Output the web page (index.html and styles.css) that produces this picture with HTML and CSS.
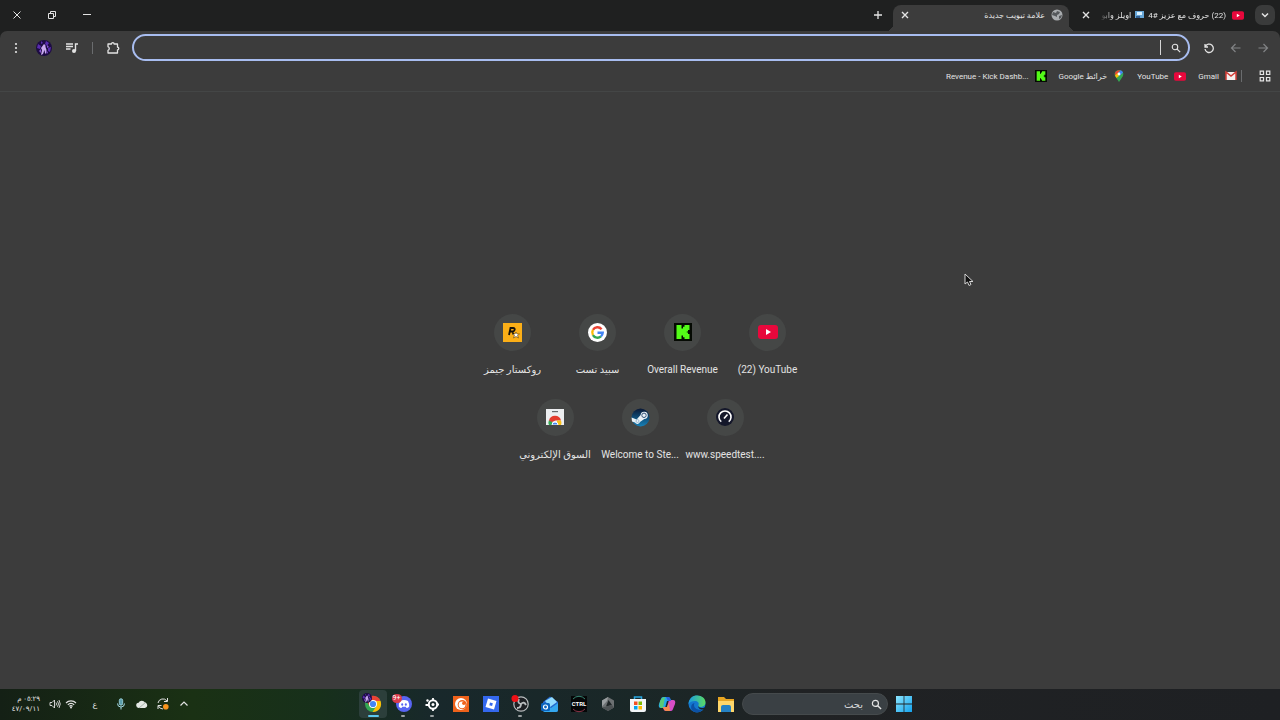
FILE: index.html
```html
<!DOCTYPE html>
<html lang="ar" dir="rtl">
<head>
    <meta charset="UTF-8">
    <meta name="viewport" content="width=device-width, initial-scale=1.0">
    <title>علامة تبويب جديدة</title>
    <link rel="stylesheet" href="styles.css">
</head>
<body>
    <!-- shared icons -->
    <svg class="defs" aria-hidden="true">
        <symbol id="i-youtube" viewBox="0 0 20 14"><rect width="20" height="14" rx="3" fill="#e8083c"/><path d="M8 4l5 3-5 3z" fill="#fff"/></symbol>
        <symbol id="i-kick" viewBox="0 0 18 18"><path d="M0 0h18v18H0z" fill="#050a03"/><path d="M2.500 2h5v3.500H9V3.800h1.500V2h5v5H14v1.500h-1.200v1H14V11h1.500v5h-5v-1.800H9v-1.700H7.500V16h-5z" fill="#53fc18"/></symbol>
        <symbol id="i-close" viewBox="0 0 10 10"><path d="M2 2l6 6M8 2L2 8" stroke="currentColor" stroke-width="1.400"/></symbol>
        <symbol id="i-search" viewBox="0 0 12 12"><circle cx="4.800" cy="4.800" r="3.300" fill="none" stroke="currentColor" stroke-width="1.300"/><path d="M7.300 7.300l3.700 3.700" stroke="currentColor" stroke-width="1.500"/></symbol>
        <symbol id="i-arrow" viewBox="0 0 12 12"><path d="M1.500 6h9M6.500 2l4 4-4 4" fill="none" stroke="currentColor" stroke-width="1.200"/></symbol>
        <symbol id="i-avatar" viewBox="0 0 16 16"><circle cx="8" cy="8" r="8" fill="#1d0c43"/><path d="M2 4l3 2-1 3-3-1zM10 1l3 2-2 3-2-2zM12 8l3-1-1 5-2-1zM5 1l2 2-2 1z" fill="#5a2cb0"/><path d="M8 4q2 1 1.500 3l1 3-.5 4-1-1-.5-3L7 14l-2 1 1-5-1-2z" fill="#c8a8ee"/><path d="M3 11l2-2v4zM11 5l2 2-2 1zM10 11l2 1-1 2z" fill="#8853d6"/></symbol>
    </svg>

    <header class="tab-strip">
        <button class="tab-search" aria-label="البحث في علامات التبويب">
            <svg width="10" height="10" viewBox="0 0 10 10"><path d="M2 3.500l3 3 3-3" fill="none" stroke="currentColor" stroke-width="1.500"/></svg>
        </button>
        <div class="tab">
            <svg width="12" height="9"><use href="#i-youtube"/></svg>
            <span class="tab-title faded">(22) حروف مع عزيز #4 <svg class="tv" width="9" height="8" viewBox="0 0 9 8"><path d="M0 0h9v7H0z" fill="#67a7d8"/><path d="M2 1h5v3H2z" fill="#d9f0ff"/><path d="M1 5h4v2H1z" fill="#315f92"/></svg> اويلز وابو</span>
            <button class="icon-btn" aria-label="إغلاق"><svg width="10" height="10"><use href="#i-close"/></svg></button>
        </div>
        <div class="tab active">
            <svg width="12" height="12" viewBox="0 0 12 12"><circle cx="6" cy="6" r="5.500" fill="#a9acaf"/><path d="M2 3l3 1 1-2 3 1-1 2-2 1v2L4 7 1 6zM8 7l3-1-1 3-2 1z" fill="#55585b"/></svg>
            <span class="tab-title">علامة تبويب جديدة</span>
            <button class="icon-btn" aria-label="إغلاق"><svg width="10" height="10"><use href="#i-close"/></svg></button>
        </div>
        <button class="icon-btn new-tab" aria-label="علامة تبويب جديدة"><svg width="10" height="10" viewBox="0 0 10 10"><path d="M5 1v8M1 5h8" stroke="currentColor" stroke-width="1.300"/></svg></button>
        <div class="window-controls">
            <button class="icon-btn" aria-label="تصغير"><svg width="10" height="10" viewBox="0 0 10 10"><path d="M1 4.500h8" stroke="currentColor"/></svg></button>
            <button class="icon-btn" aria-label="استعادة"><svg width="10" height="10" viewBox="0 0 10 10"><path d="M1.500 3.500h5v5h-5zM3.500 3V1.500h5v5H7" fill="none" stroke="currentColor"/></svg></button>
            <button class="icon-btn" aria-label="إغلاق النافذة"><svg width="10" height="10" viewBox="0 0 10 10"><path d="M1.500 1.500l7 7M8.500 1.500l-7 7" stroke="currentColor"/></svg></button>
        </div>
    </header>

    <nav class="toolbar">
        <button class="icon-btn dim" aria-label="رجوع"><svg width="12" height="12"><use href="#i-arrow"/></svg></button>
        <button class="icon-btn dim flip" aria-label="للأمام"><svg width="12" height="12"><use href="#i-arrow"/></svg></button>
        <button class="icon-btn" aria-label="إعادة التحميل"><svg width="12" height="12" viewBox="0 0 12 12"><path d="M2 2v3h3M2.300 4.600A4.200 4.200 0 1 1 2 7" fill="none" stroke="currentColor" stroke-width="1.300"/></svg></button>
        <label class="omnibox">
            <svg width="10" height="10"><use href="#i-search"/></svg>
            <span class="caret"></span>
            <input type="text" aria-label="شريط العناوين">
        </label>
        <div class="extensions">
            <button class="icon-btn" aria-label="الإضافات"><svg width="14" height="14" viewBox="0 0 14 14"><path d="M2 3h3.500a1.300 1.300 0 0 1 2.600 0h3.400v3.200a1.300 1.300 0 0 1 0 2.600V12H2V9.300a1.900 1.900 0 0 0 0-3.600z" fill="none" stroke="currentColor" stroke-width="1.300" stroke-linejoin="round"/></svg></button>
            <span class="divider"></span>
            <button class="icon-btn" aria-label="التحكم في الوسائط"><svg width="14" height="12" viewBox="0 0 14 12"><path d="M1 2h7M1 4.500h7M1 7h4.500M10.500 9V2H13" fill="none" stroke="currentColor" stroke-width="1.400"/><circle cx="9" cy="9" r="2" fill="currentColor"/></svg></button>
            <button class="icon-btn" aria-label="الملف الشخصي"><svg width="16" height="16"><use href="#i-avatar"/></svg></button>
            <button class="icon-btn" aria-label="القائمة"><svg width="4" height="12" viewBox="0 0 4 12"><g fill="currentColor"><circle cx="2" cy="2" r="1.100"/><circle cx="2" cy="6" r="1.100"/><circle cx="2" cy="10" r="1.100"/></g></svg></button>
        </div>
    </nav>

    <nav class="bookmarks">
        <button class="icon-btn apps" aria-label="التطبيقات"><svg width="12" height="12" viewBox="0 0 12 12"><path d="M1.200 1.200h3.300v3.300H1.200zM7.500 1.200h3.300v3.300H7.500zM1.200 7.500h3.300v3.300H1.200zM7.500 7.500h3.300v3.300H7.500z" fill="none" stroke="currentColor" stroke-width="1.200"/></svg></button>
        <span class="divider"></span>
        <a class="bookmark" href="#"><svg width="12" height="12" viewBox="0 0 12 12"><path d="M1 2h10v8H1z" fill="#f4f0ef"/><path d="M1 10V2l5 4 5-4v8" fill="none" stroke="#d23c36" stroke-width="1.500"/></svg><span>Gmail</span></a>
        <a class="bookmark" href="#"><svg width="12" height="9"><use href="#i-youtube"/></svg><span>YouTube</span></a>
        <a class="bookmark" href="#"><svg width="12" height="12" viewBox="0 0 12 12"><path d="M6 12L3 7.500C0 4 2.500 0 6 0s6 4 3 7.500z" fill="#34a853"/><path d="M3 1.500A5 5 0 0 1 7.500.3L3 5.500 1.800 4A4 4 0 0 1 3 1.500z" fill="#ea4335"/><path d="M7.500.3A4 4 0 0 1 10 2.500L6.500 6 5 3.500z" fill="#4285f4"/><path d="M2 5.500L4.500 3 6 6 3.500 8z" fill="#fbbc04"/><circle cx="6" cy="4" r="1.400" fill="#fff"/></svg><span>خرائط Google</span></a>
        <a class="bookmark" href="#"><svg width="12" height="12"><use href="#i-kick"/></svg><span dir="ltr">Revenue - Kick Dashb...</span></a>
    </nav>

    <main class="new-tab-page">
        <div class="shortcuts">
            <a class="shortcut" href="#"><span class="circle"><svg width="20" height="14"><use href="#i-youtube"/></svg></span><span dir="ltr">(22) YouTube</span></a>
            <a class="shortcut" href="#"><span class="circle"><svg width="18" height="18"><use href="#i-kick"/></svg></span><span dir="ltr">Overall Revenue</span></a>
            <a class="shortcut" href="#"><span class="circle"><svg width="19" height="19" viewBox="0 0 20 20"><circle cx="10" cy="10" r="10" fill="#fff"/><g fill="none" stroke-width="2.500"><path d="M14.300 6.500A5.500 5.500 0 0 0 5.200 7.300" stroke="#ea4335"/><path d="M5.200 7.300a5.500 5.500 0 0 0 0 5.400" stroke="#fbbc05"/><path d="M5.200 12.700a5.500 5.500 0 0 0 8.400 1.400" stroke="#34a853"/><path d="M13.600 14.100a5.500 5.500 0 0 0 1.900-3.800H10" stroke="#4285f4"/></g></svg></span><span>سبيد تست</span></a>
            <a class="shortcut" href="#"><span class="circle"><svg width="19" height="19" viewBox="0 0 19 19"><path d="M0 0h19v19H0z" fill="#fbaf17"/><path d="M6 12L7.500 5H10q2.500.3 1.500 2.200Q11 8.500 9 8.500H7M9.500 8.500l1 3" fill="none" stroke="#17120a" stroke-width="1.800"/><path d="M13 9l1 2h2.500l-2 1.500 1 2.500-2.500-1.500L10.500 15l1-2.500-2-1.500H12z" fill="#fff" stroke="#5b3c08" stroke-width=".6"/></svg></span><span>روكستار جيمز</span></a>
            <a class="shortcut" href="#"><span class="circle"><svg width="18" height="18" viewBox="0 0 18 18"><circle cx="9" cy="9" r="9" fill="#14172a"/><path d="M5.300 13.700a6 6 0 1 1 7.400 0" fill="none" stroke="#fff" stroke-width="1.600"/><path d="M8 10.500l3.500-4" stroke="#fff" stroke-width="1.600"/></svg></span><span dir="ltr">www.speedtest....</span></a>
            <a class="shortcut" href="#"><span class="circle"><svg width="19" height="19" viewBox="0 0 19 19"><defs><linearGradient id="steam" x2="0" y2="1"><stop stop-color="#0a1835"/><stop offset="1" stop-color="#1681b8"/></linearGradient></defs><circle cx="9.500" cy="9.500" r="9" fill="url(#steam)"/><path d="M.6 9.500l5 2 4-4.500a3.600 3.600 0 1 1 3.700 4L9 14a2.700 2.700 0 0 1-5 .5l-3-1z" fill="#eaf1f6"/><circle cx="13" cy="7.300" r="2.200" fill="none" stroke="#34557a"/><circle cx="6.500" cy="13" r="1.500" fill="none" stroke="#7aa6c4" stroke-width=".7"/></svg></span><span dir="ltr">Welcome to Ste...</span></a>
            <a class="shortcut" href="#"><span class="circle"><svg width="18" height="16" viewBox="0 0 18 16"><path d="M0 0h18v16H0z" fill="#eceef0"/><path d="M6 2h6v1.200H6z" fill="#66696d"/><path d="M3 16a6 6 0 0 1 0-5l3.500 1.500L6 16z" fill="#34a853"/><path d="M3 11.500a6.200 6.200 0 0 1 12 0H9.500L6 13z" fill="#e33b2e"/><path d="M11 11.500h4q1 2.500 0 4.500h-4z" fill="#fbc116"/><path d="M6 16a3 3 0 1 1 6 0z" fill="#4285f4" stroke="#fff"/></svg></span><span>السوق الإلكتروني</span></a>
        </div>
    </main>

    <footer class="taskbar">
        <div></div>
        <div class="dock">
            <button class="icon-btn" aria-label="ابدأ"><svg width="16" height="16" viewBox="0 0 16 16"><defs><linearGradient id="win" x2="1" y2="1"><stop stop-color="#8ce6ff"/><stop offset="1" stop-color="#14a2ed"/></linearGradient></defs><path d="M0 0h7.600v7.600H0zM8.400 0H16v7.600H8.400zM0 8.400h7.600V16H0zM8.400 8.400H16V16H8.400z" fill="url(#win)"/></svg></button>
            <label class="task-search">
                <svg width="11" height="11"><use href="#i-search"/></svg>
                <input type="text" placeholder="بحث" aria-label="بحث">
            </label>
            <div class="apps-row">
                <button class="app" aria-label="مستكشف الملفات"><svg width="18" height="18" viewBox="0 0 18 18"><path d="M1 2h6l2 2h8v13H1z" fill="#e8a622"/><path d="M1 6h16v11H1z" fill="#ffd76a"/><path d="M4 12q0-2 2-2h6q2 0 2 2v5H4z" fill="#2582c4"/></svg></button>
                <button class="app" aria-label="Edge"><svg width="18" height="18" viewBox="0 0 18 18"><defs><linearGradient id="edge" x2="1" y2="0"><stop stop-color="#199be2"/><stop offset="1" stop-color="#5bdc62"/></linearGradient></defs><circle cx="9" cy="9" r="8.500" fill="#1377cf"/><path d="M.5 9C1 3 5 .5 9 .5c5 0 8.500 3 8.500 7 0 3-2.500 4.500-5 4.500-2 0-3-1-2-2 1-2-1-4-3.500-4C4 6 1.500 7 .5 9z" fill="url(#edge)"/><path d="M6.500 8c-2 4 2 8 8 6.500-3 4-9 3.500-11 0-1-3 0-6 3-6.500z" fill="#0c51a5"/><path d="M10 10c0 2 1.500 3 4 3 1.500 0 2.500-.3 3.300-1 .2 1-.5 2-1.500 2.500-3 .5-6-1-5.800-4.500z" fill="#17242a"/></svg></button>
                <button class="app" aria-label="Copilot"><svg width="18" height="18" viewBox="0 0 18 18"><path d="M5 2h5q2 0 2.500 2L13 6H9L7 13H3Q0 13 1 9l2-5q.5-2 2-2z" fill="#24a8e8"/><path d="M2 6l2-3 3-1-2 11H3q-2-1-1-7z" fill="#58c976"/><path d="M13 16H8q-2 0-2.500-2L5 12h4l2-7h4q3 0 2 4l-2 5q-.5 2-2 2z" fill="#d74dc7"/><path d="M5 12h4l2-4 1 8H8q-2 0-3-4z" fill="#f4884f"/><path d="M8 2h2q2 0 3 4h-3z" fill="#295fdf"/></svg></button>
                <button class="app" aria-label="Microsoft Store"><svg width="18" height="18" viewBox="0 0 18 18"><path d="M5.500 5V2h7v3" fill="none" stroke="#28a6df" stroke-width="1.500"/><path d="M1 4h16v11q0 2-2 2H3q-2 0-2-2z" fill="#f2f5f7"/><path d="M5 6.500h3.500V10H5z" fill="#f25022"/><path d="M9.500 6.500H13V10H9.500z" fill="#7fba00"/><path d="M5 11h3.500v3.500H5z" fill="#00a4ef"/><path d="M9.500 11H13v3.500H9.500z" fill="#ffb900"/></svg></button>
                <button class="app" aria-label="Hexagon"><svg width="18" height="18" viewBox="0 0 18 18"><path d="M9 2l6 3.500v7L9 16l-6-3.500v-7z" fill="#6c7072"/><path d="M9 2L3 5.500v6L8 6z" fill="#9a9ea0"/><path d="M9.500 5l3.500 5-6 1.500z" fill="#202628"/><path d="M3 12.500l4-1 6-1.500 2 2.500L9 16z" fill="#4d5254"/></svg></button>
                <button class="app" aria-label="CTRL"><svg width="18" height="18" viewBox="0 0 18 18"><path d="M1 1h16v16H1z" fill="#050607"/><path d="M3 4a8 8 0 0 1 12 0" fill="none" stroke="#43a58e" stroke-width=".8"/><path d="M3 14a8 8 0 0 0 12 0" fill="none" stroke="#ad4058" stroke-width=".8"/><text x="9" y="11" direction="ltr" text-anchor="middle" class="ctrl-text">CTRL</text></svg></button>
                <button class="app" aria-label="Outlook"><svg width="18" height="18" viewBox="0 0 18 18"><path d="M2 7l7-5.500L17 7v8q0 2-2 2H4q-2 0-2-2z" fill="#2467cc"/><path d="M4 6l7-4 5 5-7 5z" fill="#91dcff"/><path d="M2 8l8 5 7-5v7q0 2-2 2H4q-2 0-2-2z" fill="#35a8ef"/><rect y="8" width="9" height="8" rx="1.500" fill="#0b64bd"/><circle cx="4.500" cy="12" r="2" fill="none" stroke="#fff" stroke-width="1.200"/></svg></button>
                <button class="app running" aria-label="OBS Studio"><svg width="18" height="18" viewBox="0 0 18 18"><circle cx="10" cy="9" r="7.200" fill="#1d2024" stroke="#b9bdbf" stroke-width="1.200"/><path d="M10 9q-4-1-2-5M10 9q3-3 5 1M10 9q0 4-4 4" fill="none" stroke="#b9bdbf" stroke-width="1.800"/><circle cx="4" cy="3.500" r="3.500" fill="#ee1016"/></svg></button>
                <button class="app" aria-label="Roblox"><svg width="16" height="16" viewBox="0 0 16 16"><path d="M0 0h16v16H0z" fill="#3468ee"/><path d="M5 2.500l8.500 2.400L11 13.500 2.500 11z" fill="#fff"/><path d="M7 6.500l2.800.7-.7 2.800-2.800-.8z" fill="#3468ee"/></svg></button>
                <button class="app" aria-label="Crunchyroll"><svg width="16" height="16" viewBox="0 0 16 16"><path d="M0 0h16v16H0z" fill="#ef621b"/><circle cx="8" cy="8" r="6" fill="#fff"/><circle cx="9.300" cy="8.700" r="4.600" fill="#ef621b"/><circle cx="9" cy="8.800" r="3.400" fill="#fff"/><circle cx="10.800" cy="7.300" r="1.700" fill="#ef621b"/></svg></button>
                <button class="app running" aria-label="SteelSeries GG"><svg width="16" height="16" viewBox="0 0 16 16"><circle cx="9" cy="8.500" r="4.200" fill="none" stroke="#fff" stroke-width="2"/><circle cx="9" cy="8.500" r="1.500" fill="#fff"/><path d="M9 2v2M9 13v2M1.500 9H5M13 8.500h2" stroke="#fff" stroke-width="1.800"/><circle cx="3.500" cy="4.500" r="1.200" fill="#fff"/></svg></button>
                <button class="app running" aria-label="Discord"><svg width="18" height="18" viewBox="0 0 18 18"><circle cx="10" cy="9" r="8" fill="#5865f2"/><path d="M6 6q4-2 8 0 1.500 3 1.200 5.500Q14 13 12.500 13l-.7-1.200H8.200L7.500 13Q6 13 4.800 11.500 4.500 9 6 6z" fill="#fff"/><ellipse cx="8.200" cy="9.500" rx="1" ry="1.200" fill="#5865f2"/><ellipse cx="11.800" cy="9.500" rx="1" ry="1.200" fill="#5865f2"/></svg><span class="badge" dir="ltr">9+</span></button>
                <button class="app running current" aria-label="Chrome"><svg width="18" height="18" viewBox="0 0 18 18"><circle cx="9" cy="9" r="8" fill="#34a853"/><path d="M2 5a8 8 0 0 1 14.500 1H9l-3.500 5z" fill="#ea4335"/><path d="M9 6h7.500A8 8 0 0 1 8.500 17l4-6z" fill="#fbbc05"/><circle cx="9" cy="9" r="4" fill="#fff"/><circle cx="9" cy="9" r="3.100" fill="#4285f4"/></svg><svg class="profile" width="10" height="10"><use href="#i-avatar"/></svg></button>
            </div>
        </div>
        <div class="tray">
            <button class="icon-btn" aria-label="إظهار الرموز المخفية"><svg width="10" height="10" viewBox="0 0 10 10"><path d="M1.500 6.500L5 3l3.500 3.500" fill="none" stroke="currentColor" stroke-width="1.200"/></svg></button>
            <button class="icon-btn" aria-label="التحديثات"><svg width="12" height="12" viewBox="0 0 12 12"><path d="M1 5a5 5 0 0 1 9-2M10.500 0v3.500H7M6 11a5 5 0 0 1-4.500-3M1 11V7.500h3.500" fill="none" stroke="currentColor" stroke-width="1"/><circle cx="8.800" cy="8.800" r="2.800" fill="#f7941d"/></svg></button>
            <button class="icon-btn" aria-label="OneDrive"><svg width="12" height="10" viewBox="0 0 12 10"><path d="M3 9a2.600 2.600 0 0 1-.4-5.200A3.600 3.600 0 0 1 9 3.500 2.800 2.800 0 0 1 9 9z" fill="#e4e9e5"/><path d="M3 9l6.500-5.500" stroke="#aab6ad"/></svg></button>
            <button class="icon-btn" aria-label="الميكروفون"><svg width="10" height="12" viewBox="0 0 10 12"><rect x="3.300" y=".7" width="3.400" height="6.500" rx="1.700" fill="#5d9fae" stroke="#a6dce7" stroke-width=".8"/><path d="M1.500 5.500a3.500 3.500 0 0 0 7 0M5 9v2.500" fill="none" stroke="#a6dce7"/></svg></button>
            <button class="icon-btn lang">ع</button>
            <button class="icon-btn network" aria-label="الشبكة والصوت">
                <svg width="12" height="10" viewBox="0 0 12 10"><path d="M1 4a7 7 0 0 1 10 0M2.800 5.800a4.500 4.500 0 0 1 6.400 0M4.400 7.400a2.300 2.300 0 0 1 3.200 0" fill="none" stroke="currentColor" stroke-width="1.200"/><circle cx="6" cy="8.600" r="1" fill="currentColor"/></svg>
                <svg width="12" height="10" viewBox="0 0 12 10"><path d="M1 3.500h2L5.500 1v8L3 6.500H1zM7 3.500q1 1.500 0 3M8.500 2.200q2 2.800 0 5.600M10 1q2.500 4 0 8" fill="none" stroke="currentColor" stroke-width=".9"/></svg>
            </button>
            <div class="clock"><time>٠٥:٢٩ م</time><time>٤٧/٠٩/١١</time></div>
        </div>
    </footer>

    <svg class="cursor" width="10" height="14" viewBox="0 0 10 14"><path d="M1 1v10l2.500-2 1.500 3.500 2-1L5.500 8.500H9z" fill="#111" stroke="#d5d5d5"/></svg>
</body>
</html>
```
FILE: styles.css
```css
* {
    box-sizing: border-box;
}
body {
    margin: 0;
    min-height: 100vh;
    display: flex;
    flex-direction: column;
    background-color: #1f2020;
    color: #e3e3e3;
    font-family: Roboto, "Open Sans", "DejaVu Sans", sans-serif;
    font-size: 8px;
}
a {
    color: inherit;
    text-decoration: none;
}
svg {
    flex-shrink: 0;
}
button, input {
    border: none;
    padding: 0;
    background: none;
    color: inherit;
    font: inherit;
    outline: none;
}
.defs {
    position: absolute;
    width: 0;
    height: 0;
}
.icon-btn {
    display: flex;
    align-items: center;
    justify-content: center;
    flex-shrink: 0;
    width: 16px;
    height: 20px;
}
.divider {
    width: 1px;
    height: 12px;
    background-color: #6a6c6e;
}

/* tabs */
.tab-strip {
    display: flex;
    align-items: flex-start;
    height: 31px;
    padding: 5px 5px 0 9px;
}
.tab-search {
    display: flex;
    align-items: center;
    justify-content: center;
    width: 20px;
    height: 20px;
    border-radius: 7px;
    background-color: #3a3b3b;
}
.tab {
    position: relative;
    display: flex;
    align-items: center;
    gap: 6px;
    width: 176px;
    height: 26px;
    padding: 0 6px 6px 4px;
    border-radius: 8px 8px 0 0;
}
.tab-search + .tab {
    margin-right: 5px;
}
.tab.active {
    margin-right: 5px;
    background-color: #3c3c3c;
}
/* curved feet of the selected tab */
.tab.active::before, .tab.active::after {
    content: "";
    position: absolute;
    bottom: 0;
    width: 7px;
    height: 7px;
}
.tab.active::before {
    left: 100%;
    background: radial-gradient(circle at top right, transparent 7px, #3c3c3c 7px);
}
.tab.active::after {
    right: 100%;
    background: radial-gradient(circle at top left, transparent 7px, #3c3c3c 7px);
}
.tab-title {
    flex: 1;
    overflow: hidden;
    white-space: nowrap;
}
.tab-title.faded {
    mask-image: linear-gradient(to left, #000 90%, transparent);
}
.tv {
    margin: 0 2px;
    vertical-align: middle;
}
.new-tab {
    margin-right: 7px;
}
.window-controls {
    display: flex;
    gap: 19px;
    margin-right: auto;
}

/* toolbar */
.toolbar {
    display: flex;
    align-items: center;
    gap: 11px;
    height: 33px;
    padding: 0 9px 0 8px;
    border-radius: 7px 7px 0 0;
    background-color: #3c3c3c;
}
.dim {
    color: #818385;
}
.flip {
    transform: scaleX(-1);
}
.omnibox {
    display: flex;
    align-items: center;
    flex: 1;
    gap: 10px;
    height: 27px;
    padding: 0 7px;
    border: 2px solid #a8bdf0;
    border-radius: 14px;
}
.omnibox input {
    flex: 1;
    min-width: 0;
}
.caret {
    width: 1px;
    height: 15px;
    background-color: #d6d6d6;
}
.extensions {
    display: flex;
    align-items: center;
    gap: 12px;
}

/* bookmarks */
.bookmarks {
    display: flex;
    align-items: center;
    gap: 12px;
    height: 28px;
    padding: 0 7px 3px;
    border-bottom: 1px solid #444646;
    background-color: #3c3c3c;
}
.bookmarks .divider {
    margin: 0 3px 0 -7px;
    margin-left: -8px;
}
.bookmark {
    display: flex;
    align-items: center;
    gap: 6px;
    white-space: nowrap;
}

/* new tab page */
.new-tab-page {
    flex: 1;
    display: flex;
    align-items: center;
    justify-content: center;
    padding-bottom: 2px;
    background-color: #3c3c3c;
}
.shortcuts {
    display: flex;
    flex-wrap: wrap;
    justify-content: center;
    width: 340px;
}
.shortcut {
    display: flex;
    flex-direction: column;
    align-items: center;
    gap: 11px;
    width: 85px;
    height: 85px;
    padding-top: 9px;
    font-size: 10px;
    line-height: 16px;
    white-space: nowrap;
}
.circle {
    display: flex;
    align-items: center;
    justify-content: center;
    width: 37px;
    height: 37px;
    border-radius: 50%;
    background-color: #454746;
}

/* taskbar */
.taskbar {
    display: grid;
    grid-template-columns: 1fr auto 1fr;
    align-items: center;
    height: 31px;
    padding-bottom: 1px;
    background: linear-gradient(to right, #142015, #1a3114 15%, #17301b 25%, #18282b 34%, #1a2727 50%, #202224 62%, #1e2023);
}
.dock {
    display: flex;
    align-items: center;
    padding-right: 9px;
}
.task-search {
    display: flex;
    align-items: center;
    gap: 8px;
    width: 146px;
    height: 22px;
    margin-right: 8px;
    padding: 0 5px;
    border: 1px solid #454a4c;
    border-radius: 11px;
    background-color: #3a4044;
}
.task-search input {
    flex: 1;
    min-width: 0;
    font-size: 10px;
}
.task-search input::placeholder {
    color: #d5d7d8;
}
.apps-row {
    display: flex;
    justify-content: space-between;
    width: 381px;
    margin-right: 2px;
}
.app {
    position: relative;
    display: flex;
    align-items: center;
    justify-content: center;
    width: 28px;
    height: 28px;
    border-radius: 4px;
}
.app.running::after {
    content: "";
    position: absolute;
    bottom: 1px;
    width: 4px;
    height: 2px;
    border-radius: 1px;
    background-color: #9aa0a2;
}
.app.current {
    background-color: #2c3f3b;
}
.app.current::after {
    width: 11px;
    background-color: #5cc8ef;
}
.badge {
    position: absolute;
    top: 4px;
    left: 3px;
    width: 10px;
    height: 9px;
    border-radius: 5px;
    background-color: #d83b4b;
    color: #fff;
    font-size: 7px;
    line-height: 9px;
}
.profile {
    position: absolute;
    top: 3px;
    left: 3px;
}
.ctrl-text {
    fill: #fff;
    font-size: 6px;
    font-weight: bold;
}
.tray {
    display: flex;
    align-items: center;
    justify-content: flex-end;
    gap: 5px;
    padding-left: 12px;
}
.network {
    gap: 4px;
    width: 28px;
}
.lang {
    margin: 0 5px;
}
.clock {
    display: flex;
    flex-direction: column;
    align-items: flex-end;
    width: 32px;
    font-size: 7px;
    line-height: 10px;
}
.clock time {
    width: 28px;
}
.cursor {
    position: absolute;
    top: 273px;
    left: 964px;
}
```
